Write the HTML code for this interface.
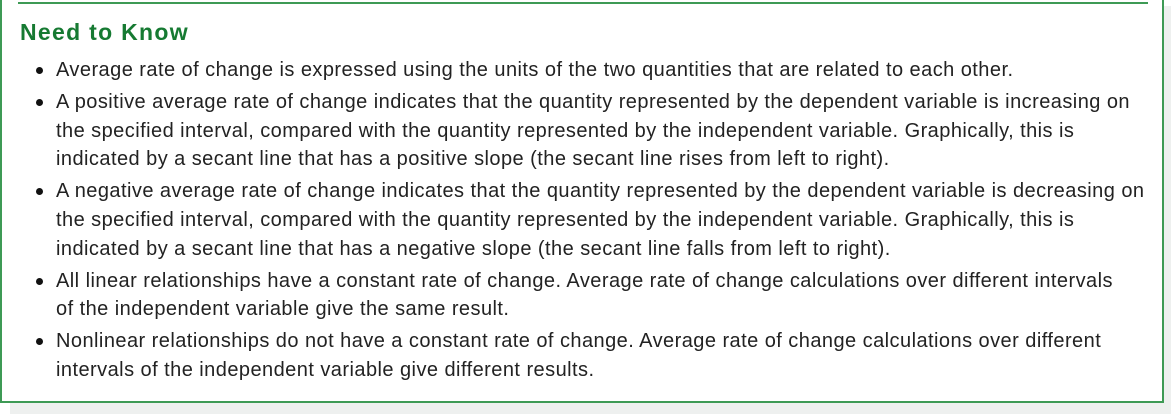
<!DOCTYPE html>
<html><head><style>
body{margin:0;width:1176px;height:420px;background:#fff;position:relative;overflow:hidden;font-family:"Liberation Sans",sans-serif;}
.shadow{position:absolute;left:10px;top:6px;width:1161px;height:408px;background:#eef0ef;}
.box{position:absolute;left:0;top:0;width:1160px;height:401px;background:#fff;border-left:2px solid #3e9a55;border-right:2px solid #3e9a55;border-bottom:2px solid #3e9a55;}
.topline{position:absolute;left:18px;top:2px;width:1130px;height:2px;background:#3e9a55;}
h2{position:absolute;left:20px;top:17px;margin:0;font-size:23px;line-height:30px;font-weight:bold;color:#167a32;letter-spacing:1.3px;}
ul{position:absolute;left:56px;top:56px;margin:0;padding:0;list-style:none;width:1110px;}
li{font-size:20px;letter-spacing:0.45px;line-height:28.8px;color:#222;position:relative;white-space:nowrap;}
li+li{margin-top:3px;}
li:before{content:"";position:absolute;left:-20px;top:11px;width:7px;height:7px;border-radius:50%;background:#111;}
</style></head><body>
<div class="shadow"></div>
<div class="box"></div>
<div class="topline"></div>
<h2>Need to Know</h2>
<ul>
<li>Average rate of change is expressed using the units of the two quantities that are related to each other.</li>
<li>A positive average rate of change indicates that the quantity represented by the dependent variable is increasing on<br>the specified interval, compared with the quantity represented by the independent variable. Graphically, this is<br>indicated by a secant line that has a positive slope (the secant line rises from left to right).</li>
<li>A negative average rate of change indicates that the quantity represented by the dependent variable is decreasing on<br>the specified interval, compared with the quantity represented by the independent variable. Graphically, this is<br>indicated by a secant line that has a negative slope (the secant line falls from left to right).</li>
<li>All linear relationships have a constant rate of change. Average rate of change calculations over different intervals<br>of the independent variable give the same result.</li>
<li>Nonlinear relationships do not have a constant rate of change. Average rate of change calculations over different<br>intervals of the independent variable give different results.</li>
</ul>
</body></html>
